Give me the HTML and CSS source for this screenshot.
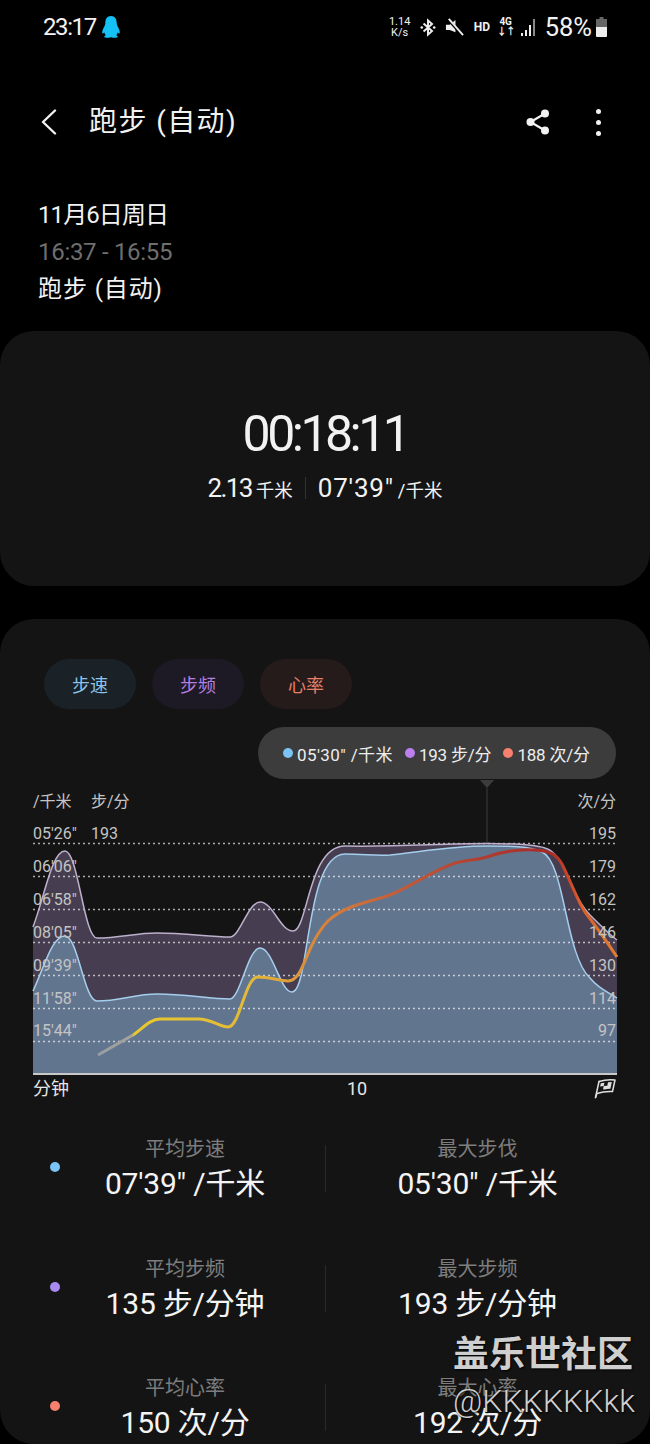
FILE: index.html
```html
<!DOCTYPE html>
<html lang="zh">
<head>
<meta charset="utf-8">
<title>跑步 (自动)</title>
<link rel="stylesheet" href="styles.css">
</head>
<body>
<div class="page">
  <header class="status">
    <span class="clock">23:17</span>
    <svg class="qq" viewBox="0 0 20 22" width="20" height="22"><path fill="#14c0f5" d="M10 0C6 0 4.300 3 4.300 7C4.300 9 3.500 10 2.500 12C1.300 14.500 .8 17 1.600 17.500C2.300 17.800 3 16.800 3.300 16.300C3.500 17.500 4 18.500 4.800 19.300C3.700 19.800 3 20.300 3.300 21C3.700 21.800 7 22 10 21.200C13 22 16.300 21.800 16.700 21C17 20.300 16.300 19.800 15.200 19.300C16 18.500 16.500 17.500 16.700 16.300C17 16.800 17.700 17.800 18.400 17.500C19.200 17 18.700 14.500 17.500 12C16.500 10 15.700 9 15.700 7C15.700 3 14 0 10 0Z"/></svg>
    <span class="status-right">
      <span class="speed"><span>1.14</span><span>K/s</span></span>
      <svg class="st-icon st-bt" viewBox="0 0 18 20" width="16" height="19"><path fill="none" stroke="#eee" stroke-width="2.200" d="M4 5.500L13.500 14L9 18V2L13.500 6L4 14.500"/><circle cx="2" cy="10" r="1.500" fill="#eee"/><circle cx="16" cy="10" r="1.500" fill="#eee"/></svg>
      <svg class="st-icon st-mute" viewBox="0 0 20 20" width="19" height="19"><path fill="#eee" d="M1 7H5L11 2V15L5 12.500H1Z"/><path stroke="#000" stroke-width="3" d="M3 1L19 19"/><path stroke="#eee" stroke-width="2" d="M4 1L19 18"/></svg>
      <span class="hd">HD</span>
      <span class="net"><span>4G</span><span class="net-arrows">↓↑</span></span>
      <svg class="st-icon st-signal" viewBox="0 0 15 17" width="15" height="17"><path fill="#eee" d="M0 14h2v3H0zM4 11h2v6H4zM8 6h2v11H8z"/><path fill="#888" d="M12 0h2v17h-2z"/></svg>
      <span class="percent">58%</span>
      <svg class="st-icon st-battery" viewBox="0 0 11 20" width="11" height="20"><path fill="#666" d="M3.500 0h4v2H11v18H0V2h3.500z"/><path fill="#eee" d="M0 10h11v8.500a1.500 1.500 0 0 1-1.500 1.500h-8A1.500 1.500 0 0 1 0 18.500z"/></svg>
    </span>
  </header>

  <nav class="appbar">
    <svg class="back" viewBox="0 0 16 26" width="16" height="26"><path fill="none" stroke="#f2f2f2" stroke-width="2.400" stroke-linecap="round" stroke-linejoin="round" d="M14 1.500L2 13L14 24.500"/></svg>
    <h1 class="title">跑步 (自动)</h1>
    <svg class="share" viewBox="0 0 24 26" width="24" height="26"><g fill="#f2f2f2"><circle cx="19" cy="4.500" r="4"/><circle cx="4.500" cy="13" r="4"/><circle cx="19" cy="21.500" r="4"/></g><path fill="none" stroke="#f2f2f2" stroke-width="2.200" d="M19 4.500L4.500 13L19 21.500"/></svg>
    <span class="more"><i></i><i></i><i></i></span>
  </nav>

  <section class="info">
    <p class="info-date">11月6日周日</p>
    <p class="muted">16:37 - 16:55</p>
    <p class="info-type">跑步 (自动)</p>
  </section>

  <section class="card summary">
    <div class="duration">00:18:11</div>
    <div class="summary-row">
      <span class="sum-cell sum-dist"><b>2.13</b> <small>千米</small></span>
      <span class="sum-sep"></span>
      <span class="sum-cell sum-pace"><b>07'39"</b> <small>/千米</small></span>
    </div>
  </section>

  <section class="card detail">
    <div class="tabs">
      <span class="tab tab-blue">步速</span>
      <span class="tab tab-purple">步频</span>
      <span class="tab tab-red">心率</span>
    </div>
    <div class="tooltip">
      <span class="tip-item tip-pace"><i class="dot dot-blue"></i>05'30" /千米</span>
      <span class="tip-item tip-rate"><i class="dot dot-purple"></i>193 步/分</span>
      <span class="tip-item tip-rate"><i class="dot dot-red"></i>188 次/分</span>
    </div>
    <svg class="chart" viewBox="0 780 650 325" width="650" height="325">
      <defs>
        <linearGradient id="hr" gradientUnits="userSpaceOnUse" x1="98" y1="0" x2="617" y2="0">
          <stop offset="0" stop-color="#9a9da3"/>
          <stop offset=".065" stop-color="#a3a39a"/>
          <stop offset=".07" stop-color="#e8c92e"/>
          <stop offset=".3" stop-color="#e3b83a"/>
          <stop offset=".42" stop-color="#d9873a"/>
          <stop offset=".56" stop-color="#c4603a"/>
          <stop offset=".75" stop-color="#ae3c30"/>
          <stop offset=".87" stop-color="#a82a28"/>
          <stop offset=".93" stop-color="#dc5c28"/>
          <stop offset="1" stop-color="#e08030"/>
        </linearGradient>
      </defs>
      <path class="guide" d="M487 788V856"/>
      <path class="tip-arrow" d="M479 779H495L487 788Z"/>
      <path class="area-purple" d="M33 927C45 895 52 851 65 851C78 851 84 938 97 938C120 938 135 933 157 933C185 933 210 937 230 937C240 937 248 902 260 902C273 902 280 931 293 931C308 931 308 846 345 846C400 847 440 843.500 487 843.500C510 843.500 535 845 545 848C565 853 570 895 590 915C600 925 610 935 617 940V1074H33Z"/>
      <path class="area-blue" d="M33 991C45 965 52 936 65 936C78 936 84 1001 97 1001C120 1001 135 994 157 994C185 994 210 999 230 999C240 999 248 948 260 948C273 948 280 992 292 992C310 992 305 854 345 854C365 854 375 856 390 855C420 852 450 846 487 846C510 846 530 846 542 852C565 862 565 955 590 978C600 990 610 993 617 998V1074H33Z"/>
      <path class="dots" d="M33 843.500H617M33 876.500H617M33 909.500H617M33 942.500H617M33 975.500H617M33 1008.500H617M33 1041.500H617"/>
      <path class="line-purple" d="M33 927C45 895 52 851 65 851C78 851 84 938 97 938C120 938 135 933 157 933C185 933 210 937 230 937C240 937 248 902 260 902C273 902 280 931 293 931C308 931 308 846 345 846C400 847 440 843.500 487 843.500C510 843.500 535 845 545 848C565 853 570 895 590 915C600 925 610 935 617 940"/>
      <path class="line-blue" d="M33 991C45 965 52 936 65 936C78 936 84 1001 97 1001C120 1001 135 994 157 994C185 994 210 999 230 999C240 999 248 948 260 948C273 948 280 992 292 992C310 992 305 854 345 854C365 854 375 856 390 855C420 852 450 846 487 846C510 846 530 846 542 852C565 862 565 955 590 978C600 990 610 993 617 998"/>
      <path class="line-hr" stroke="url(#hr)" d="M98 1055L133 1035C142 1029 150 1019 160 1019H198C212 1019 220 1027 228 1027C240 1027 245 977 258 977C270 977 280 981 288 981C304 981 305 945 328 921C345 905 370 902 390 895C410 887 430 872 455 863C470 859 480 860 490 856C505 851 520 849 535 850C550 851 556 854 562 864C570 880 578 902 585 912C595 925 607 942 617 957"/>
      <path class="baseline" d="M33 1074H617"/>
      <g class="axis">
        <text x="33" y="807">/千米</text>
        <text x="91" y="807">步/分</text>
        <text x="616" y="807" text-anchor="end">次/分</text>
        <text x="33" y="839">05'26"</text>
        <text x="91" y="839">193</text>
        <text x="33" y="872">06'06"</text>
        <text x="33" y="905">06'58"</text>
        <text x="33" y="938">08'05"</text>
        <text x="33" y="971">09'39"</text>
        <text x="33" y="1004">11'58"</text>
        <text x="33" y="1036">15'44"</text>
        <text x="616" y="839" text-anchor="end">195</text>
        <text x="616" y="872" text-anchor="end">179</text>
        <text x="616" y="905" text-anchor="end">162</text>
        <text x="616" y="938" text-anchor="end">146</text>
        <text x="616" y="971" text-anchor="end">130</text>
        <text x="616" y="1004" text-anchor="end">114</text>
        <text x="616" y="1036" text-anchor="end">97</text>
      </g>
      <text class="xlabel" x="33" y="1095">分钟</text>
      <text class="xlabel" x="357" y="1095" text-anchor="middle">10</text>
      <g class="flag">
        <path d="M599 1081.500Q607 1079 615 1080L612.500 1091.500Q604 1091 597 1093.500L595.500 1097.500"/>
        <path d="M599 1081.500L595.500 1097.500"/>
        <path class="flag-fill" d="M600.800 1083.200l3.600-.5-.7 3.400-3.600.5zM608 1082.300l3.800-.2-.7 3.400-3.800.2zM603.700 1086.100l3.600-.3-.7 3.400-3.600.4zM607.300 1085.700l3.800-.2-.7 3.300-3.800.2z"/>
      </g>
    </svg>
    <div class="stats">
      <div class="stat-row">
        <i class="dot dot-blue stat-dot"></i>
        <div class="stat"><span class="stat-label">平均步速</span><span class="stat-value">07'39" /千米</span></div>
        <div class="stat stat-r"><span class="stat-label">最大步伐</span><span class="stat-value">05'30" /千米</span></div>
      </div>
      <div class="stat-row">
        <i class="dot dot-violet stat-dot"></i>
        <div class="stat"><span class="stat-label">平均步频</span><span class="stat-value">135 步/分钟</span></div>
        <div class="stat stat-r"><span class="stat-label">最大步频</span><span class="stat-value">193 步/分钟</span></div>
      </div>
      <div class="stat-row">
        <i class="dot dot-red stat-dot"></i>
        <div class="stat"><span class="stat-label">平均心率</span><span class="stat-value">150 次/分</span></div>
        <div class="stat stat-r"><span class="stat-label">最大心率</span><span class="stat-value">192 次/分</span></div>
      </div>
    </div>
  </section>

  <div class="watermark">
    <span class="wm-title">盖乐世社区</span>
    <span class="wm-user">@KKKKKKkk</span>
  </div>
</div>
</body>
</html>
```
FILE: styles.css
```css
* { box-sizing: border-box; }
html, body { margin: 0; padding: 0; background: #000; }
body {
  font-family: Roboto, "Noto Sans CJK SC", sans-serif;
  color: #f2f2f2;
}
.page {
  position: relative;
  width: 650px;
  height: 1444px;
  overflow: hidden;
  background: #000;
}
p, h1 { margin: 0; font-weight: 400; }
i { display: block; font-style: normal; }

/* status bar */
.status {
  height: 54px;
  display: flex;
  align-items: center;
  padding: 0 43px 0 43px;
}
.clock { font-size: 24px; line-height: 54px; letter-spacing: -1.400px; }
.qq { margin-left: 5px; }
.status-right { margin-left: auto; display: flex; align-items: center; }
.speed {
  display: flex;
  flex-direction: column;
  align-items: center;
  font-size: 11px;
  line-height: 11px;
  width: 20px;
}
.st-icon { display: block; }
.st-bt { margin-left: 10px; }
.st-mute { margin-left: 9px; }
.hd { margin-left: 10px; font-size: 12px; font-weight: 700; width: 18px; }
.net {
  margin-left: 5px;
  display: flex;
  flex-direction: column;
  align-items: center;
  font-size: 10px;
  line-height: 10px;
  font-weight: 700;
}
.net-arrows { font-size: 10px; letter-spacing: -1px; }
.st-signal { margin-left: 6px; }
.percent { margin-left: 9px; font-size: 25.500px; }
.st-battery { margin-left: 4px; }

/* app bar */
.appbar {
  margin-top: 43px;
  height: 50px;
  display: flex;
  align-items: center;
  padding: 0 49px 0 41px;
}
.title { margin-left: 32px; font-size: 28px; line-height: 50px; letter-spacing: 1.400px; }
.share { margin-left: auto; }
.more {
  margin-left: 46px;
  display: flex;
  flex-direction: column;
  gap: 6px;
}
.more i { width: 5px; height: 5px; border-radius: 50%; background: #f2f2f2; }

/* info */
.info { margin-top: 50px; padding-left: 38px; }
.info p { font-size: 24px; line-height: 37px; }
.info .muted { color: #6e6e6e; letter-spacing: -.3px; }
.info .info-date { letter-spacing: -.9px; }
.info .info-type { letter-spacing: .9px; }

/* cards */
.card { background: #141414; border-radius: 34px; }
.summary {
  margin-top: 23px;
  height: 255px;
  padding-top: 73px;
  text-align: center;
}
.duration { font-size: 50px; line-height: 60px; letter-spacing: -3.500px; }
.summary-row {
  margin-top: 9px;
  display: flex;
  justify-content: center;
  align-items: center;
  gap: 12px;
}
.sum-cell b { font-weight: 400; font-size: 26px; }
.sum-dist b { letter-spacing: -1.600px; }
.sum-pace b { letter-spacing: .8px; }
.sum-cell small { font-size: 18.500px; }
.sum-sep { width: 1px; height: 22px; background: #333; }

.detail {
  margin-top: 33px;
  height: 825px;
  padding-top: 40px;
}
.tabs { display: flex; gap: 16px; padding-left: 44px; }
.tab {
  width: 92px;
  height: 50px;
  border-radius: 25px;
  display: flex;
  align-items: center;
  justify-content: center;
  font-size: 18px;
}
.tab-blue { background: #1a2228; color: #8ec5ee; }
.tab-purple { background: #1d1925; color: #b57ee0; }
.tab-red { background: #251b1a; color: #e87e68; }

.tooltip {
  margin: 18px 0 0 258px;
  width: 358px;
  height: 52px;
  border-radius: 26px;
  background: #3c3c3c;
  display: flex;
  align-items: center;
  gap: 12px;
  padding-left: 25px;
  font-size: 17px;
  color: #eee;
}
.tip-item { display: flex; align-items: center; gap: 4px; }
.tip-pace { letter-spacing: .4px; }
.tip-rate { letter-spacing: -.2px; }
.dot { width: 10px; height: 10px; border-radius: 50%; }
.dot-blue { background: #7cc3f5; }
.dot-purple { background: #bb7fef; }
.dot-violet { background: #a78bf0; }
.dot-red { background: #f8806e; }

/* chart */
.chart { display: block; margin-top: 1px; }
.tip-arrow { fill: #3c3c3c; }
.guide { stroke: #3d3d3d; stroke-width: 1; }
.area-purple { fill: #463e50; }
.area-blue { fill: #62758f; }
.dots { fill: none; stroke: #fff; stroke-opacity: .65; stroke-width: 1.300; stroke-dasharray: 2 3; }
.line-purple { fill: none; stroke: #bdb0cc; stroke-width: 1.500; }
.line-blue { fill: none; stroke: #a5cdec; stroke-width: 1.500; }
.line-hr { fill: none; stroke-width: 3px; stroke-linejoin: round; }
.baseline { stroke: #c8c8c8; stroke-width: 2; }
.axis text { font-size: 16px; fill: #c4c4c4; }
.xlabel { font-size: 18px; fill: #e6e6e6; }
.flag path { fill: none; stroke: #e0e0e0; stroke-width: 1.500; stroke-linejoin: round; stroke-linecap: round; }
.flag .flag-fill { fill: #e0e0e0; stroke: none; }

/* stats */
.stats { display: flex; flex-direction: column; margin-top: 27px; }
.stat-row {
  position: relative;
  height: 119.500px;
  display: flex;
  padding-left: 45px;
}
.stat-dot { position: absolute; left: 50px; top: 30px; }
.stat {
  width: 280px;
  height: 72px;
  display: flex;
  flex-direction: column;
  align-items: center;
}
.stat-r { position: relative; width: 305px; }
.stat-r::before {
  content: "";
  position: absolute;
  left: 0;
  top: 13px;
  width: 1px;
  height: 47px;
  background: #2a2a2a;
}
.stat-label { font-size: 20px; line-height: 34px; color: #7d7d7d; }
.stat-value { font-size: 30px; line-height: 36px; color: #f4f4f4; letter-spacing: -.2px; }

/* watermark */
.watermark {
  position: absolute;
  left: 453px;
  top: 1331px;
  display: flex;
  flex-direction: column;
  text-shadow: 1px 1px 2px #000;
  color: #cfcfcf;
  white-space: nowrap;
}
.wm-title { font-size: 36px; line-height: 48px; font-weight: 700; }
.wm-user { font-size: 32px; line-height: 44px; font-weight: 300; }
```
